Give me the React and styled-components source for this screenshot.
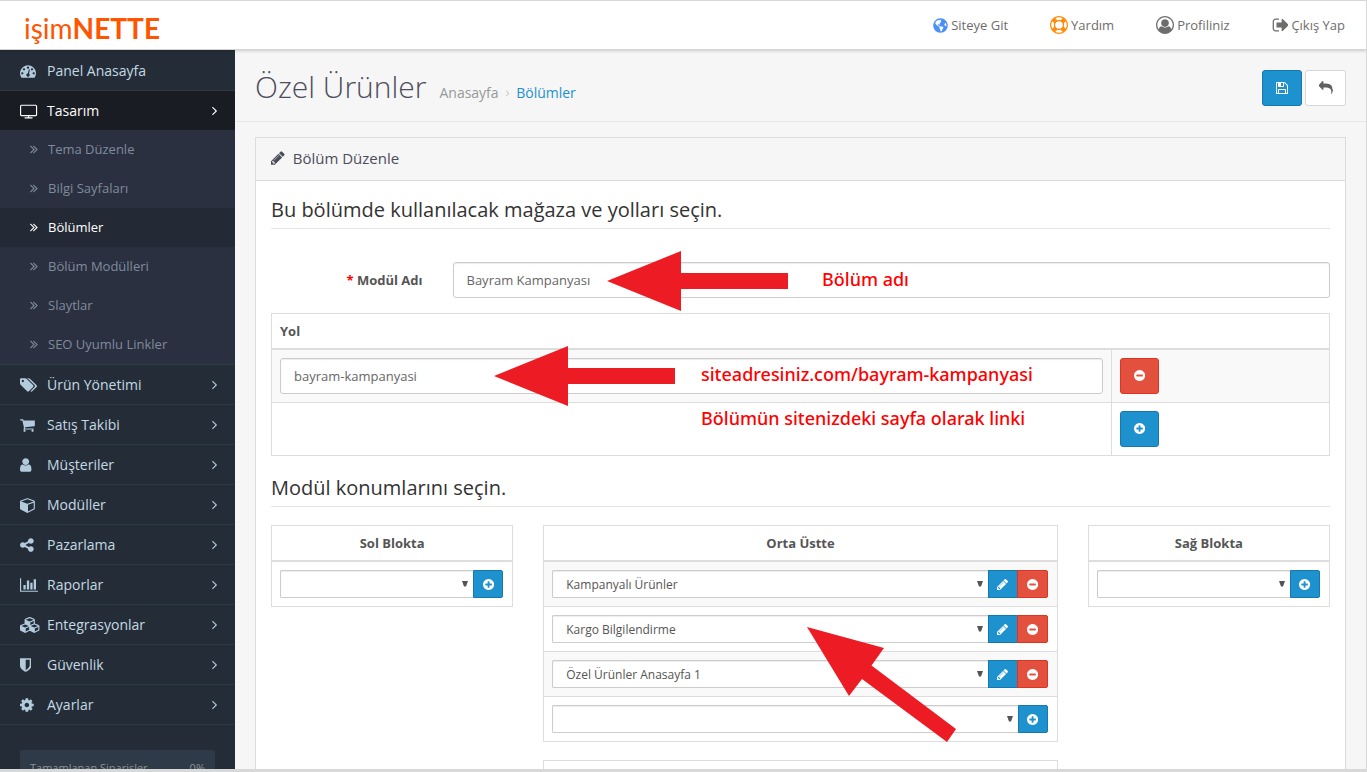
import React from "react";
import styled, { createGlobalStyle, css } from "styled-components";
import { FaGlobeAmericas } from "react-icons/fa";

const GlobalStyle = createGlobalStyle`
  *, *::before, *::after { box-sizing: border-box; }
  html, body { margin: 0; padding: 0; }
  body {
    font-family: "Open Sans", "Noto Sans", sans-serif;
    font-size: 13px;
    line-height: 20px;
    color: #666;
    background: #f6f6f6;
  }
  a { text-decoration: none; color: inherit; }
  button, input, select { font-family: inherit; }
`;

const icons = {
  dashboard: [1792, "M384 1152q0-53-37.5-90.5t-90.5-37.5-90.5 37.5-37.5 90.5 37.5 90.5 90.5 37.5 90.5-37.5 37.5-90.5zm192-448q0-53-37.5-90.5t-90.5-37.5-90.5 37.5-37.5 90.5 37.5 90.5 90.5 37.5 90.5-37.5 37.5-90.5zm428 481l101-382q6-26-7.5-48.5t-38.5-29.5-48 6.5-30 39.5l-101 382q-60 5-107 43.5t-63 98.5q-20 77 20 146t117 89 146-20 89-117q16-60-6-117t-72-91zm660-33q0-53-37.5-90.5t-90.5-37.5-90.5 37.5-37.5 90.5 37.5 90.5 90.5 37.5 90.5-37.5 37.5-90.5zm-640-640q0-53-37.5-90.5t-90.5-37.5-90.5 37.5-37.5 90.5 37.5 90.5 90.5 37.5 90.5-37.5 37.5-90.5zm448 192q0-53-37.5-90.5t-90.5-37.5-90.5 37.5-37.5 90.5 37.5 90.5 90.5 37.5 90.5-37.5 37.5-90.5zm320 448q0 261-141 483-19 29-54 29h-1402q-35 0-54-29-141-221-141-483 0-182 71-348t191-286 286-191 348-71 348 71 286 191 191 286 71 348z"],
  television: [1984, "M1856 1312v-960q0-13-9.5-22.5t-22.5-9.5h-1600q-13 0-22.5 9.5t-9.5 22.5v960q0 13 9.5 22.5t22.5 9.5h1600q13 0 22.5-9.5t9.5-22.5zm128-960v960q0 66-47 113t-113 47h-736v128h352q14 0 23 9t9 23v64q0 14-9 23t-23 9h-832q-14 0-23-9t-9-23v-64q0-14 9-23t23-9h352v-128h-736q-66 0-113-47t-47-113v-960q0-66 47-113t113-47h1600q66 0 113 47t47 113z", 64],
  tags: [1984, "M576 448q0-53-37.5-90.5t-90.5-37.5-90.5 37.5-37.5 90.5 37.5 90.5 90.5 37.5 90.5-37.5 37.5-90.5zm1067 576q0 53-37 90l-491 492q-39 37-91 37-53 0-90-37l-715-716q-38-37-64.5-101t-26.5-117v-416q0-52 38-90t90-38h416q53 0 117 26.5t102 64.5l715 714q37 39 37 91zm384 0q0 53-37 90l-491 492q-39 37-91 37-36 0-59-14t-53-45l470-470q37-37 37-90 0-52-37-91l-715-714q-38-38-102-64.5t-117-26.5h224q53 0 117 26.5t102 64.5l715 714q37 39 37 91z", 128],
  cart: [1728, "M704 1536q0 52-38 90t-90 38-90-38-38-90 38-90 90-38 90 38 38 90zm896 0q0 52-38 90t-90 38-90-38-38-90 38-90 90-38 90 38 38 90zm128-1088v512q0 24-16.5 42.5t-40.5 21.5l-1044 122q13 60 13 70 0 16-24 64h920q26 0 45 19t19 45-19 45-45 19h-1024q-26 0-45-19t-19-45q0-11 8-31.5t16-36 21.5-40 15.5-29.5l-177-823h-204q-26 0-45-19t-19-45 19-45 45-19h256q16 0 28.5 6.5t19.5 15.5 13 24.5 8 26 5.5 29.5 4.5 26h1201q26 0 45 19t19 45z", 64],
  user: [1408, "M1536 1399q0 109-62.5 187t-150.5 78h-854q-88 0-150.5-78t-62.5-187q0-85 8.5-160.5t31.5-152 58.5-131 94-89 134.5-34.5q131 128 313 128t313-128q76 0 134.5 34.5t94 89 58.5 131 31.5 152 8.5 160.5zm-256-887q0 159-112.5 271.5t-271.5 112.5-271.5-112.5-112.5-271.5 112.5-271.5 271.5-112.5 271.5 112.5 112.5 271.5z", 256],
  cube: [1728, "M896 1629l640-349v-636l-640 233v752zm-64-865l698-254-698-254-698 254zm832-252v768q0 35-18 65t-49 47l-704 384q-28 16-61 16t-61-16l-704-384q-31-17-49-47t-18-65v-768q0-40 23-73t61-47l704-256q22-8 44-8t44 8l704 256q38 14 61 47t23 73z"],
  share: [1536, "M1344 1024q133 0 226.5 93.5t93.5 226.5-93.5 226.5-226.5 93.5-226.5-93.5-93.5-226.5q0-12 2-34l-360-180q-92 86-218 86-133 0-226.5-93.5t-93.5-226.5 93.5-226.5 226.5-93.5q126 0 218 86l360-180q-2-22-2-34 0-133 93.5-226.5t226.5-93.5 226.5 93.5 93.5 226.5-93.5 226.5-226.5 93.5q-126 0-218-86l-360 180q2 22 2 34t-2 34l360 180q92-86 218-86z", 128],
  chart: [2048, "M640 896v512h-256v-512h256zm384-512v1024h-256v-1024h256zm1024 1152v128h-2048v-1536h128v1408h1920zm-640-896v768h-256v-768h256zm384-384v1152h-256v-1152h256z"],
  cubes: [2304, "M640 1632l384-192v-314l-384 164v342zm-64-454l404-173-404-173-404 173zm1088 454l384-192v-314l-384 164v342zm-64-454l404-173-404-173-404 173zm-448-293l384-165v-266l-384 164v267zm-64-379l441-189-441-189-441 189zm1088 518v416q0 36-19 67t-52 47l-448 224q-25 14-57 14t-57-14l-448-224q-4-2-7-4-2 2-7 4l-448 224q-25 14-57 14t-57-14l-448-224q-33-16-52-47t-19-67v-416q0-38 21.5-70t56.5-48l434-186v-400q0-38 21.5-70t56.5-48l448-192q23-10 50-10t50 10l448 192q35 16 56.5 48t21.5 70v400l434 186q36 16 57 48t21 70z"],
  shield: [1280, "M1344 960v-640h-448v1137q119-63 213-137 235-184 235-360zm192-768v768q0 86-33.5 170.5t-83 150-118 127.5-126.5 103-121 77.5-89.5 49.5-42.5 20q-12 6-26 6t-26-6q-16-7-42.5-20t-89.5-49.5-121-77.5-126.5-103-118-127.5-83-150-33.5-170.5v-768q0-26 19-45t45-19h1152q26 0 45 19t19 45z", 256],
  cog: [1536, "M1152 896q0-106-75-181t-181-75-181 75-75 181 75 181 181 75 181-75 75-181zm512-109v222q0 12-8 23t-20 13l-185 28q-19 54-39 91 35 50 107 138 10 12 10 25t-9 23q-27 37-99 108t-94 71q-12 0-26-9l-138-108q-44 23-91 38-16 136-29 186-7 28-36 28h-222q-14 0-24.5-8.5t-11.5-21.5l-28-184q-49-16-90-37l-141 107q-10 9-25 9-14 0-25-11-126-114-165-168-7-10-7-23 0-12 8-23 15-21 51-66.5t54-70.5q-27-50-41-99l-183-27q-13-2-21-12.5t-8-23.5v-222q0-12 8-23t19-13l186-28q14-46 39-92-40-57-107-138-10-12-10-24 0-10 9-23 26-36 98.5-107.5t94.5-71.5q13 0 26 10l138 107q44-23 91-38 16-136 29-186 7-28 36-28h222q14 0 24.5 8.5t11.5 21.5l28 184q49 16 90 37l142-107q9-9 24-9 13 0 25 10 129 119 165 170 7 8 7 22 0 12-8 23-15 21-51 66.5t-54 70.5q26 50 41 98l183 28q13 2 21 12.5t8 23.5z", 128],
  angle: [640, "M1171 960q0 13-10 23l-466 466q-10 10-23 10t-23-10l-50-50q-10-10-10-23t10-23l393-393-393-393q-10-10-10-23t10-23l50-50q10-10 23-10t23 10l466 466q10 10 10 23z", 576],
  angles: [1024, "M979 960q0 13-10 23l-466 466q-10 10-23 10t-23-10l-50-50q-10-10-10-23t10-23l393-393-393-393q-10-10-10-23t10-23l50-50q10-10 23-10t23 10l466 466q10 10 10 23zm384 0q0 13-10 23l-466 466q-10 10-23 10t-23-10l-50-50q-10-10-10-23t10-23l393-393-393-393q-10-10-10-23t10-23l50-50q10-10 23-10t23 10l466 466q10 10 10 23z", 384],
  pencil: [1536, "M491 1536l91-91-235-235-91 91v107h128v128h107zm523-928q0-22-22-22-10 0-17 7l-542 542q-7 7-7 17 0 22 22 22 10 0 17-7l542-542q7-7 7-17zm-54-192l416 416-832 832h-416v-416zm683 96q0 53-37 90l-166 166-416-416 166-165q36-38 90-38 53 0 91 38l235 234q37 39 37 91z", 128],
  plus: [1536, "M1344 960v-128q0-26-19-45t-45-19h-256v-256q0-26-19-45t-45-19h-128q-26 0-45 19t-19 45v256h-256q-26 0-45 19t-19 45v128q0 26 19 45t45 19h256v256q0 26 19 45t45 19h128q26 0 45-19t19-45v-256h256q26 0 45-19t19-45zm320-64q0 209-103 385.5t-279.5 279.5-385.5 103-385.5-103-279.5-279.5-103-385.5 103-385.5 279.5-279.5 385.5-103 385.5 103 279.5 279.5 103 385.5z", 128],
  minus: [1536, "M1344 960v-128q0-26-19-45t-45-19h-768q-26 0-45 19t-19 45v128q0 26 19 45t45 19h768q26 0 45-19t19-45zm320-64q0 209-103 385.5t-279.5 279.5-385.5 103-385.5-103-279.5-279.5-103-385.5 103-385.5 279.5-279.5 385.5-103 385.5 103 279.5 279.5 103 385.5z", 128],
  save: [1536, "M512 1536h768v-384h-768v384zm896 0h128v-896q0-14-10-38.5t-20-34.5l-281-281q-10-10-34-20t-39-10v416q0 40-28 68t-68 28h-576q-40 0-68-28t-28-68v-416h-128v1280h128v-416q0-40 28-68t68-28h832q40 0 68 28t28 68v416zm-384-928v-320q0-13-9.5-22.5t-22.5-9.5h-192q-13 0-22.5 9.5t-9.5 22.5v320q0 13 9.5 22.5t22.5 9.5h192q13 0 22.5-9.5t9.5-22.5zm640 32v928q0 40-28 68t-68 28h-1344q-40 0-68-28t-28-68v-1344q0-40 28-68t68-28h928q40 0 88 20t76 48l280 280q28 28 48 76t20 88z", 128],
  reply: [1792, "M1792 1120q0 166-127 451-3 7-10.5 24t-13.5 30-13 22q-12 17-28 17-15 0-23.5-10t-8.5-25q0-9 2.5-26.5t2.5-23.5q5-68 5-123 0-112-19.5-200.5t-54-153.5-89-112-117-78-148.5-50-170.5-27-196-8.5h-224v256q0 26-19 45t-45 19-45-19l-512-512q-19-19-19-45t19-45l512-512q19-19 45-19t45 19 19 45v256h224q713 0 875 403 53 134 53 333z"],
  ring: [1792, "M896 0q182 0 348 71t286 191 191 286 71 348-71 348-191 286-286 191-348 71-348-71-286-191-191-286-71-348 71-348 191-286 286-191 348-71zm0 128q-190 0-361 90l194 194q82-28 167-28t167 28l194-194q-171-90-361-90zm-678 1129l194-194q-28-82-28-167t28-167l-194-194q-90 171-90 361t90 361zm678 407q190 0 361-90l-194-194q-82 28-167 28t-167-28l-194 194q171 90 361 90zm0-384q159 0 271.5-112.5t112.5-271.5-112.5-271.5-271.5-112.5-271.5 112.5-112.5 271.5 112.5 271.5 271.5 112.5zm484-217l194 194q90-171 90-361t-90-361l-194 194q28 82 28 167t-28 167z"],
  profile: [1792, "M896 0q182 0 348 71t286 191 191 286 71 348q0 181-70.5 347t-190.5 286-286 191.5-349 71.5-349-71-285.5-191.5-190.5-286-71-347.5 71-348 191-286 286-191 348-71zm619 1351q149-205 149-455 0-156-61-298t-164-245-245-164-298-61-298 61-245 164-164 245-61 298q0 250 149 455 66-327 306-327 131 128 313 128t313-128q240 0 306 327zm-235-647q0-159-112.5-271.5t-271.5-112.5-271.5 112.5-112.5 271.5 112.5 271.5 271.5 112.5 271.5-112.5 112.5-271.5z"],
  signOut: [1664, "M704 1440q0 4 1 20t.5 26.5-3 23.5-10 19.5-20.5 6.5h-320q-119 0-203.5-84.5t-84.5-203.5v-704q0-119 84.5-203.5t203.5-84.5h320q13 0 22.5 9.5t9.5 22.5q0 4 1 20t.5 26.5-3 23.5-10 19.5-20.5 6.5h-320q-66 0-113 47t-47 113v704q0 66 47 113t113 47h312l11.5 1 11.5 3 8 5.5 7 9 2 13.5zm928-544q0 26-19 45l-544 544q-19 19-45 19t-45-19-19-45v-288h-448q-26 0-45-19t-19-45v-384q0-26 19-45t45-19h448v-288q0-26 19-45t45-19 45 19l544 544q19 19 19 45z"],
};

const Glyph = styled.svg`
  display: block;
  flex: none;
  fill: currentColor;
`;

function Icon({ name, size = 14 }) {
  const [width, path, left = 0] = icons[name];
  return (
    <Glyph
      viewBox={`${left} 0 ${width} 1792`}
      width={(size * width) / 1792}
      height={size}
      aria-hidden="true"
    >
      <path d={path} />
    </Glyph>
  );
}

const Page = styled.div`
  display: flex;
  flex-direction: column;
  height: 100vh;
  overflow: hidden;
  border: solid #d8d8d8;
  border-width: 1px 1px 3px 0;
`;

const Header = styled.header`
  display: flex;
  flex: none;
  align-items: center;
  justify-content: space-between;
  height: 49px;
  padding: 0 21px 0 24px;
  background: #fff;
  border-bottom: 1px solid #d4d4d4;
  box-shadow: 0 1px 3px rgba(0, 0, 0, 0.18);
  z-index: 1;
`;

const Logo = styled.a`
  font-family: Lato, "Open Sans", sans-serif;
  font-size: 28px;
  line-height: 40px;
  padding-top: 6px;
  color: #ff5400;
`;

const TopNav = styled.nav`
  display: flex;
  gap: 42px;
`;

const TopLink = styled.a`
  display: flex;
  align-items: center;
  gap: 3px;
  color: #6d6d6d;
  svg { color: ${(p) => p.$tint || "#6d6d6d"}; }
`;

const Columns = styled.div`
  display: flex;
  flex: 1;
  min-height: 0;
`;

const Sidebar = styled.aside`
  flex: 0 0 235px;
  background: #242d37;
  overflow: hidden;
`;

const Menu = styled.ul`
  margin: 0;
  padding: 0;
  list-style: none;
  border-bottom: 1px solid #2c3a42;
`;

const MenuLink = styled.a`
  display: flex;
  align-items: center;
  height: 40px;
  padding: 0 18px 0 20px;
  font-size: 14px;
  border-top: 1px solid #2c3a42;
  color: #c4d9e4;
  svg { color: #b3cbdd; }
  ${(p) => p.$first && css`border-top-color: transparent;`}
  ${(p) => p.$open && css`
    background: #1a1c23;
    color: #fff;
    svg { color: #fff; }
  `}
`;

const IconSlot = styled.span`
  flex: 0 0 27px;
`;

const MenuLabel = styled.span`
  flex: 1;
`;

const SubMenu = styled.ul`
  margin: 0;
  padding: 0;
  list-style: none;
  background: #2a3040;
`;

const SubLink = styled.a`
  display: flex;
  align-items: center;
  gap: 10px;
  height: 39px;
  padding: 0 0 2px 30px;
  color: ${(p) => (p.$active ? "#fff" : "#808b9c")};
  background: ${(p) => (p.$active ? "#242a35" : "transparent")};
`;

const Stats = styled.div`
  display: flex;
  justify-content: space-between;
  margin: 25px 20px 0;
  padding: 8px 10px;
  height: 60px;
  font-size: 11px;
  border-radius: 2px;
  background: #2e3a47;
  color: #8d9297;
`;

const Content = styled.main`
  flex: 1;
  min-width: 0;
  overflow: hidden;
  background: #f6f6f6;
`;

const PageHead = styled.div`
  display: flex;
  align-items: flex-start;
  justify-content: space-between;
  height: 72px;
  padding: 17px 20px 0;
  border-bottom: 1px solid #e7e7e7;
`;

const TitleLine = styled.div`
  display: flex;
  align-items: baseline;
  gap: 13px;
`;

const Title = styled.h1`
  margin: 0;
  font-size: 30px;
  font-weight: 300;
  line-height: 40px;
  color: #4c4d5a;
`;

const Crumbs = styled.nav`
  display: flex;
  align-items: center;
  gap: 7px;
  font-size: 14px;
  color: #999;
  svg { color: #bbb; }
`;

const CrumbLink = styled.a`
  color: ${(p) => (p.$current ? "#1e91cf" : "#999")};
`;

const Actions = styled.div`
  display: flex;
  gap: 3px;
  padding-top: 3px;
`;

const tones = {
  primary: css`background: #1e91cf; border-color: #1978ab; color: #fff;`,
  danger: css`background: #e3503e; border-color: #dc3522; color: #fff;`,
  plain: css`background: #fff; border-color: #d8d8d8; color: #606060;`,
};

const Button = styled.button`
  display: flex;
  align-items: center;
  justify-content: center;
  width: ${(p) => p.$width || 39}px;
  height: 36px;
  padding: 0;
  border: 1px solid;
  border-radius: 3px;
  ${(p) => tones[p.$tone]}
`;

const AddonButton = styled(Button)`
  flex: none;
  width: 30px;
  height: 28px;
  border-radius: 0;
  &:last-child { border-radius: 0 2px 2px 0; }
  & + & { margin-left: -1px; width: 31px; }
`;

const Panel = styled.section`
  margin: 15px 20px 0;
  border: 1px solid #dcdcdc;
  background: #fff;
`;

const PanelHead = styled.h2`
  display: flex;
  align-items: center;
  gap: 8px;
  height: 43px;
  margin: 0;
  padding: 0 15px 2px;
  font-size: 15px;
  font-weight: 400;
  color: #4c4d5a;
  background: #f6f6f6;
  border-bottom: 1px solid #dcdcdc;
`;

const PanelBody = styled.form`
  position: relative;
  padding: 15px;
`;

const Legend = styled.h3`
  margin: 0 0 ${(p) => p.$gap}px;
  padding-bottom: 4px;
  font-size: 20px;
  font-weight: 400;
  line-height: 28px;
  color: #333;
  border-bottom: 1px solid #e5e5e5;
`;

const Field = styled.div`
  display: flex;
  align-items: center;
  margin: 0 -15px 15px;
`;

const FieldLabel = styled.label`
  flex: 0 0 calc(100% / 6);
  padding: 0 15px;
  text-align: right;
  font-weight: 700;
  color: #555;
  &::before { content: "* "; color: #f00; }
`;

const TextInput = styled.input`
  flex: 1;
  display: block;
  width: 100%;
  height: 36px;
  padding: 8px 13px;
  margin: 0 ${(p) => (p.$spaced ? 15 : 0)}px;
  font-size: 13px;
  line-height: 18px;
  color: #666;
  background: #fff;
  border: 1px solid #ccc;
  border-radius: 3px;
  box-shadow: inset 0 1px 1px rgba(0, 0, 0, 0.075);
`;

const Table = styled.table`
  width: 100%;
  margin-bottom: ${(p) => p.$gap}px;
  border-collapse: collapse;
  table-layout: fixed;
  border: 1px solid #ddd;
`;

const HeadCell = styled.th`
  height: ${(p) => (p.$block ? 36 : 35)}px;
  padding: 0 8px;
  text-align: ${(p) => (p.$block ? "center" : "left")};
  font-weight: 700;
  color: #555;
  border-bottom: 2px solid #ddd;
`;

const Row = styled.tr`
  background: ${(p) => (p.$striped ? "#f9f9f9" : "#fff")};
`;

const Cell = styled.td`
  padding: 8px;
  border: 1px solid #ddd;
`;

const ModuleCell = styled(Cell)`
  padding-right: 9px;
`;

const SideCol = styled.col`
  width: 218px;
`;

const Blocks = styled.div`
  display: flex;
  align-items: flex-start;
  margin: 0 -15px;
`;

const Block = styled.div`
  flex: 0 0 ${(p) => (p.$wide ? 50 : 25)}%;
  min-width: 0;
  padding: 0 15px;
`;

const Group = styled.div`
  display: flex;
`;

const SelectBox = styled.div`
  display: grid;
  flex: 1;
  min-width: 0;
  align-items: center;
  > * { grid-area: 1 / 1; }
`;

const Select = styled.select`
  appearance: none;
  width: 100%;
  height: 28px;
  padding: 0 24px 0 13px;
  font-size: 12px;
  color: #555;
  background: #fff;
  border: 1px solid #ccc;
  border-right: 0;
  border-radius: 2px 0 0 2px;
  box-shadow: inset 0 1px 1px rgba(0, 0, 0, 0.075);
`;

const Caret = styled.svg`
  justify-self: end;
  margin-right: 5px;
  fill: #555;
  pointer-events: none;
`;

const Marks = styled.div`
  position: absolute;
  inset: 0;
  pointer-events: none;
`;

const Arrow = styled.svg`
  position: absolute;
  left: ${(p) => p.$x}px;
  top: ${(p) => p.$y}px;
  fill: #ed1c24;
`;

const Note = styled.span`
  position: absolute;
  left: ${(p) => p.$x}px;
  top: ${(p) => p.$y}px;
  font-family: "Noto Sans", "DejaVu Sans", sans-serif;
  font-size: 18px;
  font-weight: 500;
  line-height: 22px;
  white-space: nowrap;
  color: #f00;
`;

const subItems = ["Tema Düzenle", "Bilgi Sayfaları", "Bölümler", "Bölüm Modülleri", "Slaytlar", "SEO Uyumlu Linkler"];

const menuItems = [
  ["tags", "Ürün Yönetimi"],
  ["cart", "Satış Takibi"],
  ["user", "Müşteriler"],
  ["cube", "Modüller"],
  ["share", "Pazarlama"],
  ["chart", "Raporlar"],
  ["cubes", "Entegrasyonlar"],
  ["shield", "Güvenlik"],
  ["cog", "Ayarlar"],
];

function MenuItem({ icon, label, first, open, children }) {
  return (
    <li>
      <MenuLink href="#" $first={first} $open={open}>
        <IconSlot><Icon name={icon} size={16} /></IconSlot>
        <MenuLabel>{label}</MenuLabel>
        {!first && <Icon name="angle" size={15} />}
      </MenuLink>
      {children}
    </li>
  );
}

function ModuleRow({ block, value, striped }) {
  return (
    <Row $striped={striped}>
      <ModuleCell>
        <Group>
          <SelectBox>
            <Select aria-label={block} defaultValue={value}>
              <option>{value}</option>
            </Select>
            <Caret width="6" height="6" viewBox="0 0 6 6" aria-hidden="true">
              <path d="M0 0h6l-2 5.500h-2z" />
            </Caret>
          </SelectBox>
          {value ? (
            <>
              <AddonButton type="button" $tone="primary" aria-label="Düzenle"><Icon name="pencil" size={13} /></AddonButton>
              <AddonButton type="button" $tone="danger" aria-label="Kaldır"><Icon name="minus" size={13} /></AddonButton>
            </>
          ) : (
            <AddonButton type="button" $tone="primary" aria-label="Ekle"><Icon name="plus" size={13} /></AddonButton>
          )}
        </Group>
      </ModuleCell>
    </Row>
  );
}

function ModuleTable({ title, modules = [] }) {
  return (
    <Table $gap={18}>
      <thead>
        <tr><HeadCell $block>{title}</HeadCell></tr>
      </thead>
      <tbody>
        {modules.map((m, i) => (
          <ModuleRow key={m} block={title} value={m} striped={i % 2 === 0} />
        ))}
        <ModuleRow block={title} value="" />
      </tbody>
    </Table>
  );
}

function LeftArrow({ x, y }) {
  return (
    <Arrow $x={x} $y={y} width="182" height="60" viewBox="0 0 182 60" aria-hidden="true">
      <path d="M0 30L74 0V22H181V38H74V60Z" />
    </Arrow>
  );
}

export default function App() {
  return (
    <Page>
      <GlobalStyle />
      <Header>
        <Logo href="#">işim<b>NETTE</b></Logo>
        <TopNav>
          <TopLink href="#" $tint="#4a90f7"><FaGlobeAmericas size={15} />Siteye Git</TopLink>
          <TopLink href="#" $tint="#ff8c0a"><Icon name="ring" size={18} />Yardım</TopLink>
          <TopLink href="#"><Icon name="profile" size={18} />Profiliniz</TopLink>
          <TopLink href="#"><Icon name="signOut" size={18} />Çıkış Yap</TopLink>
        </TopNav>
      </Header>
      <Columns>
        <Sidebar>
          <Menu>
            <MenuItem icon="dashboard" label="Panel Anasayfa" first />
            <MenuItem icon="television" label="Tasarım" open>
              <SubMenu>
                {subItems.map((label) => (
                  <li key={label}>
                    <SubLink href="#" $active={label === "Bölümler"}>
                      <Icon name="angles" size={14} />
                      {label}
                    </SubLink>
                  </li>
                ))}
              </SubMenu>
            </MenuItem>
            {menuItems.map(([icon, label]) => (
              <MenuItem key={label} icon={icon} label={label} />
            ))}
          </Menu>
          <Stats><span>Tamamlanan Siparişler</span><span>0%</span></Stats>
        </Sidebar>
        <Content>
          <PageHead>
            <TitleLine>
              <Title>Özel Ürünler</Title>
              <Crumbs>
                <CrumbLink href="#">Anasayfa</CrumbLink>
                <Icon name="angle" size={10} />
                <CrumbLink href="#" $current>Bölümler</CrumbLink>
              </Crumbs>
            </TitleLine>
            <Actions>
              <Button type="button" $tone="primary" $width={40} aria-label="Kaydet"><Icon name="save" size={14} /></Button>
              <Button type="button" $tone="plain" $width={41} aria-label="Geri"><Icon name="reply" size={14} /></Button>
            </Actions>
          </PageHead>
          <Panel>
            <PanelHead><Icon name="pencil" size={16} />Bölüm Düzenle</PanelHead>
            <PanelBody>
              <Legend $gap={33}>Bu bölümde kullanılacak mağaza ve yolları seçin.</Legend>
              <Field>
                <FieldLabel htmlFor="module-name">Modül Adı</FieldLabel>
                <TextInput id="module-name" $spaced defaultValue="Bayram Kampanyası" />
              </Field>
              <Table $gap={18}>
                <colgroup><col /><SideCol /></colgroup>
                <thead>
                  <tr><HeadCell colSpan={2}>Yol</HeadCell></tr>
                </thead>
                <tbody>
                  <Row $striped>
                    <Cell><TextInput aria-label="Yol" defaultValue="bayram-kampanyasi" /></Cell>
                    <Cell><Button type="button" $tone="danger" aria-label="Kaldır"><Icon name="minus" size={13} /></Button></Cell>
                  </Row>
                  <Row>
                    <Cell />
                    <Cell><Button type="button" $tone="primary" aria-label="Ekle"><Icon name="plus" size={13} /></Button></Cell>
                  </Row>
                </tbody>
              </Table>
              <Legend $gap={18}>Modül konumlarını seçin.</Legend>
              <Blocks>
                <Block><ModuleTable title="Sol Blokta" /></Block>
                <Block $wide>
                  <ModuleTable title="Orta Üstte" modules={["Kampanyalı Ürünler", "Kargo Bilgilendirme", "Özel Ürünler Anasayfa 1"]} />
                  <ModuleTable />
                </Block>
                <Block><ModuleTable title="Sağ Blokta" /></Block>
              </Blocks>
              <Marks>
                <LeftArrow x={351} y={70} />
                <LeftArrow x={238} y={165} />
                <Arrow $x={551} $y={446} width="150" height="116" viewBox="0 0 150 116" aria-hidden="true">
                  <path d="M0 0L77 21L64.500 38.500L149 102L140 115L55 52L42 69Z" />
                </Arrow>
                <Note $x={566} $y={87}>Bölüm adı</Note>
                <Note $x={445} $y={182}>siteadresiniz.com/bayram-kampanyasi</Note>
                <Note $x={445} $y={226}>Bölümün sitenizdeki sayfa olarak linki</Note>
              </Marks>
            </PanelBody>
          </Panel>
        </Content>
      </Columns>
    </Page>
  );
}
